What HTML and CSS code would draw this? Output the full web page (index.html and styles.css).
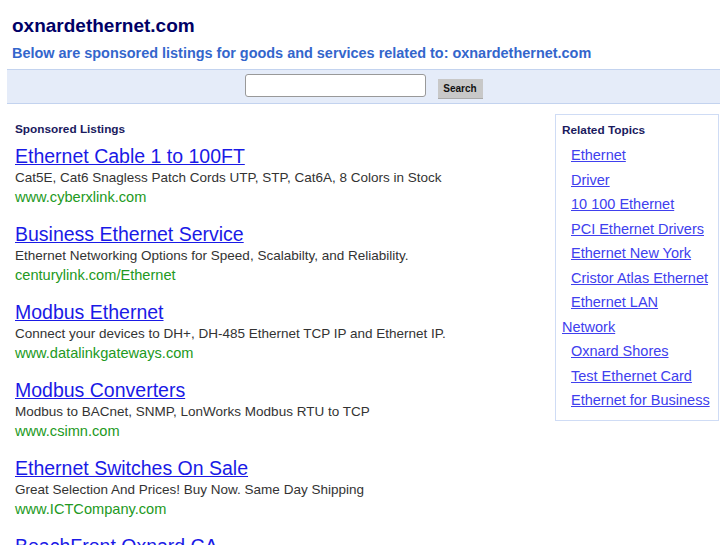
FILE: index.html
```html
<!DOCTYPE html>
<html lang="en">
<head>
  <meta charset="UTF-8" />
  <title>oxnardethernet.com</title>
  <link rel="stylesheet" href="styles.css">
</head>
<body>
  <div class="header">
    <h1>oxnardethernet.com</h1>
    <h2>Below are sponsored listings for goods and services related to: oxnardethernet.com</h2>
  </div>

  <form class="search-bar">
    <input type="text" class="search-input" />
    <button type="button" class="search-btn">Search</button>
  </form>

  <div class="main">
    <div class="listings">
      <div class="section-title">Sponsored Listings</div>

      <div class="ad">
        <a href="#" class="ad-title">Ethernet Cable 1 to 100FT</a>
        <div class="ad-desc">Cat5E, Cat6 Snagless Patch Cords UTP, STP, Cat6A, 8 Colors in Stock</div>
        <div class="ad-url">www.cyberxlink.com</div>
      </div>
      <div class="ad">
        <a href="#" class="ad-title">Business Ethernet Service</a>
        <div class="ad-desc">Ethernet Networking Options for Speed, Scalabilty, and Reliability.</div>
        <div class="ad-url">centurylink.com/Ethernet</div>
      </div>
      <div class="ad">
        <a href="#" class="ad-title">Modbus Ethernet</a>
        <div class="ad-desc">Connect your devices to DH+, DH-485 Ethernet TCP IP and Ethernet IP.</div>
        <div class="ad-url">www.datalinkgateways.com</div>
      </div>
      <div class="ad">
        <a href="#" class="ad-title">Modbus Converters</a>
        <div class="ad-desc">Modbus to BACnet, SNMP, LonWorks Modbus RTU to TCP</div>
        <div class="ad-url">www.csimn.com</div>
      </div>
      <div class="ad">
        <a href="#" class="ad-title">Ethernet Switches On Sale</a>
        <div class="ad-desc">Great Selection And Prices! Buy Now. Same Day Shipping</div>
        <div class="ad-url">www.ICTCompany.com</div>
      </div>
      <div class="ad">
        <a href="#" class="ad-title">BeachFront Oxnard CA</a>
      </div>
    </div>

    <div class="related">
      <div class="section-title">Related Topics</div>
      <ul class="topics">
        <li><a href="#">Ethernet</a></li>
        <li><a href="#">Driver</a></li>
        <li><a href="#">10 100 Ethernet</a></li>
        <li><a href="#">PCI Ethernet Drivers</a></li>
        <li><a href="#">Ethernet New York</a></li>
        <li><a href="#">Cristor Atlas Ethernet</a></li>
        <li><a href="#">Ethernet LAN</a></li>
        <li class="outdent"><a href="#">Network</a></li>
        <li><a href="#">Oxnard Shores</a></li>
        <li><a href="#">Test Ethernet Card</a></li>
        <li><a href="#">Ethernet for Business</a></li>
      </ul>
    </div>
  </div>
</body>
</html>
```

FILE: styles.css
```css
body {
  font-family: "Liberation Sans", Arial, sans-serif;
  margin: 0;
  padding: 0;
  background: #fff;
  height: 545px;
  overflow: hidden;
}
.header {
  padding: 15px 12px 0;
}
.header h1 {
  margin: 0;
  font-size: 19px;
  line-height: 22px;
  color: #000066;
}
.header h2 {
  margin: 8px 0 0;
  font-size: 14.45px;
  line-height: 17px;
  color: #3366cc;
}
.search-bar {
  margin: 7px 7px 0;
  height: 33px;
  background-color: #e5ecf9;
  border-top: 1px solid #c3d3ef;
  border-bottom: 1px solid #c3d3ef;
  display: flex;
  justify-content: center;
  align-items: center;
  gap: 12px;
}
.search-input {
  width: 181px;
  height: 23px;
  box-sizing: border-box;
  margin: 0 0 2px;
  border: 1px solid #999;
  border-radius: 3px;
  background: #fff;
}
.search-btn {
  width: 45px;
  height: 20px;
  margin-top: 5px;
  padding: 0;
  border: none;
  background-color: #c8c8c8;
  border-bottom: 1px solid #aaa;
  font-family: "Liberation Sans", Arial, sans-serif;
  font-size: 10px;
  font-weight: bold;
  color: #111;
}
.main {
  display: flex;
  justify-content: space-between;
  padding: 0 8px 0 15px;
}
.listings {
  padding-top: 18px;
}
.section-title {
  font-size: 11.8px;
  line-height: 14px;
  font-weight: bold;
  color: #1a1a5e;
}
.listings .section-title {
  margin-bottom: 9px;
}
.ad {
  margin-bottom: 16px;
}
.ad-title {
  display: block;
  font-size: 19.5px;
  line-height: 22px;
  color: #1a1ae6;
}
.ad-desc {
  font-size: 13.5px;
  line-height: 21px;
  color: #333;
}
.ad-url {
  font-size: 14.6px;
  line-height: 19px;
  color: #229922;
}
.related {
  margin-top: 10px;
  width: 164px;
  height: 307px;
  border: 1px solid #cfdcf5;
  padding: 8px 0 0 6px;
  box-sizing: border-box;
}
.topics {
  list-style: none;
  margin: 6px 0 0;
  padding: 0 0 0 9px;
}
.topics li {
  font-size: 14.5px;
  line-height: 24.5px;
}
.topics li.outdent {
  margin-left: -9px;
}
.topics a {
  color: #4040ee;
}
```
